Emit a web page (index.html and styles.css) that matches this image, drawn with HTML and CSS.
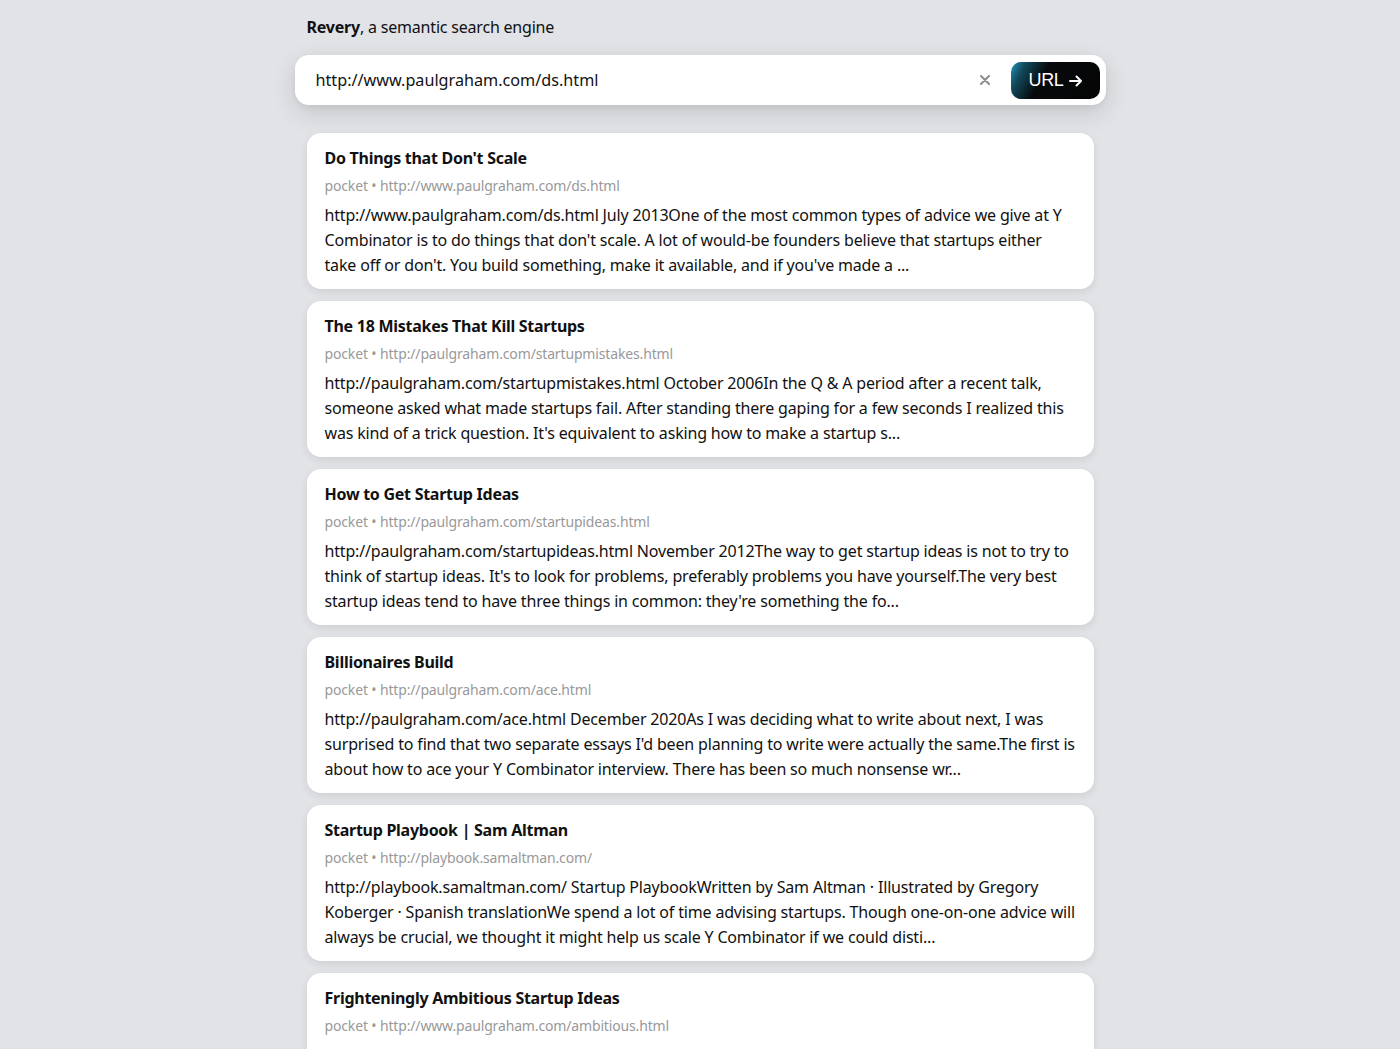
FILE: index.html
```html
<!DOCTYPE html>
<html>
<head>
<meta charset="utf-8">
<link rel="stylesheet" href="styles.css">
</head>
<body>
<div class="page">
  <div class="brand"><b>Revery</b>, a semantic search engine</div>
  <div class="search">
    <div class="query">http://www.paulgraham.com/ds.html</div>
    <svg class="clear" width="10" height="10" viewBox="0 0 10 10"><path d="M1 1L9 9M9 1L1 9" stroke="#8c8c8c" stroke-width="2" stroke-linecap="round"/></svg>
    <div class="btn"><span>URL</span><svg class="arrow" width="14" height="12" viewBox="0 0 14 12"><path d="M1 6H12M7.5 1.5L12 6L7.5 10.5" fill="none" stroke="#fff" stroke-width="2" stroke-linecap="round" stroke-linejoin="round"/></svg></div>
  </div>
  <div class="results">
    <div class="card">
      <div class="title">Do Things that Don't Scale</div>
      <div class="meta">pocket • http://www.paulgraham.com/ds.html</div>
      <div class="body">http://www.paulgraham.com/ds.html July 2013One of the most common types of advice we give at Y Combinator is to do things that don't scale. A lot of would-be founders believe that startups either take off or don't. You build something, make it available, and if you've made a ...</div>
    </div>
    <div class="card">
      <div class="title">The 18 Mistakes That Kill Startups</div>
      <div class="meta">pocket • http://paulgraham.com/startupmistakes.html</div>
      <div class="body">http://paulgraham.com/startupmistakes.html October 2006In the Q &amp; A period after a recent talk, someone asked what made startups fail. After standing there gaping for a few seconds I realized this was kind of a trick question. It's equivalent to asking how to make a startup s...</div>
    </div>
    <div class="card">
      <div class="title">How to Get Startup Ideas</div>
      <div class="meta">pocket • http://paulgraham.com/startupideas.html</div>
      <div class="body">http://paulgraham.com/startupideas.html November 2012The way to get startup ideas is not to try to think of startup ideas. It's to look for problems, preferably problems you have yourself.The very best startup ideas tend to have three things in common: they're something the fo...</div>
    </div>
    <div class="card">
      <div class="title">Billionaires Build</div>
      <div class="meta">pocket • http://paulgraham.com/ace.html</div>
      <div class="body">http://paulgraham.com/ace.html December 2020As I was deciding what to write about next, I was surprised to find that two separate essays I'd been planning to write were actually the same.The first is about how to ace your Y Combinator interview. There has been so much nonsense wr...</div>
    </div>
    <div class="card">
      <div class="title">Startup Playbook | Sam Altman</div>
      <div class="meta">pocket • http://playbook.samaltman.com/</div>
      <div class="body">http://playbook.samaltman.com/ Startup PlaybookWritten by Sam Altman · Illustrated by Gregory Koberger · Spanish translationWe spend a lot of time advising startups. Though one-on-one advice will always be crucial, we thought it might help us scale Y Combinator if we could disti...</div>
    </div>
    <div class="card card-last">
      <div class="title">Frighteningly Ambitious Startup Ideas</div>
      <div class="meta">pocket • http://www.paulgraham.com/ambitious.html</div>
    </div>
  </div>
</div>
</body>
</html>
```
FILE: styles.css
```css
html, body {
  margin: 0;
  padding: 0;
  background: #e1e3e7;
  height: 100%;
  overflow: hidden;
}
body {
  font-family: "Noto Sans", "Open Sans", sans-serif;
  color: #111;
}
.page {
  width: 787px;
  margin: 0 auto;
  padding-top: 16px;
}
.brand {
  font-size: 16px;
  line-height: 22px;
  color: #111;
  letter-spacing: -0.2px;
}
.search {
  position: relative;
  z-index: 1;
  margin: 17px -12px 0;
  height: 50px;
  background: #fff;
  border-radius: 14px;
  box-shadow: 0 8px 24px rgba(0, 0, 0, 0.13), 0 2px 6px rgba(0, 0, 0, 0.05);
  display: flex;
  align-items: center;
  padding: 0 6px 0 21px;
  box-sizing: border-box;
}
.query {
  flex: 1;
  font-size: 16.2px;
  color: #111;
}
.clear {
  margin-right: 21px;
  flex: none;
}
.btn {
  width: 89px;
  height: 37px;
  border-radius: 10px;
  background: linear-gradient(118deg, #2198bd 0%, #124a5e 14%, #070a0c 36%, #050505 100%);
  color: #fff;
  font-family: "Liberation Sans", sans-serif;
  font-size: 18px;
  letter-spacing: -0.3px;
  display: flex;
  align-items: center;
  justify-content: center;
  gap: 5px;
  padding-left: 1px;
  box-sizing: border-box;
}
.arrow {
  margin-top: 1px;
}
.results {
  margin-top: 28px;
  display: flex;
  flex-direction: column;
  gap: 12px;
}
.card {
  background: #fff;
  border-radius: 14px;
  padding: 13px 18px 11px;
  box-shadow: 0 3px 9px rgba(0, 0, 0, 0.09);
}
.card-last {
  min-height: 140px;
}
.title {
  font-weight: 700;
  font-size: 16px;
  line-height: 24px;
  letter-spacing: -0.27px;
}
.meta {
  font-size: 14px;
  color: #999;
  line-height: 20px;
  margin-top: 6px;
  letter-spacing: -0.15px;
}
.body {
  font-size: 16px;
  line-height: 25px;
  margin-top: 7px;
  letter-spacing: -0.17px;
}
```
